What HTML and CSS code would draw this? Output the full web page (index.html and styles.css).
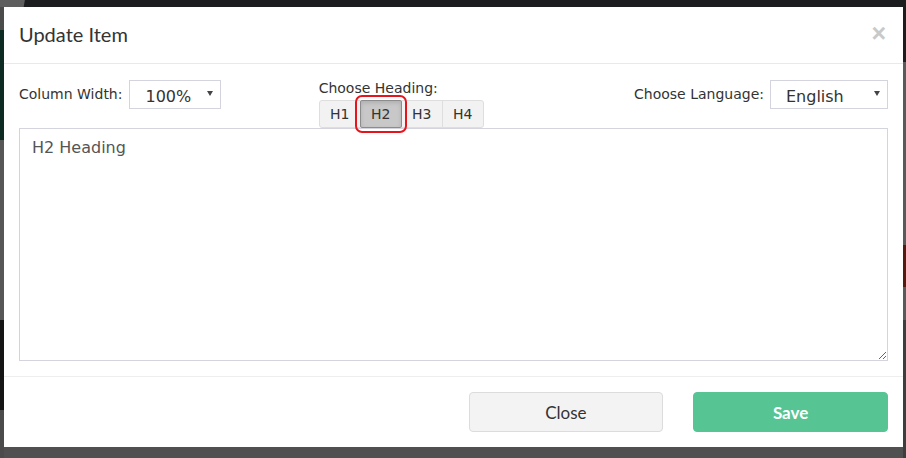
FILE: index.html
```html
<!DOCTYPE html>
<html lang="en">
<head>
<meta charset="utf-8">
<title>Update Item</title>
<link rel="stylesheet" href="styles.css">
</head>
<body>
<div class="modal">
  <div class="modal-header">
    <h4 class="modal-title">Update Item</h4>
    <button class="close" type="button">&times;</button>
  </div>
  <div class="modal-body">
    <div class="controls">
      <div class="col col-left">
        <span class="label">Column Width:</span>
        <div class="select select-width"><span>100%</span><i class="caret"></i></div>
      </div>
      <div class="col col-mid">
        <span class="label label-block">Choose Heading:</span>
        <div class="btn-group">
          <button class="hbtn" type="button">H1</button>
          <button class="hbtn active" type="button">H2</button>
          <button class="hbtn" type="button">H3</button>
          <button class="hbtn" type="button">H4</button>
        </div>
      </div>
      <div class="col col-right">
        <span class="label">Choose Language:</span>
        <div class="select select-lang"><span>English</span><i class="caret"></i></div>
      </div>
    </div>
    <textarea class="editor">H2 Heading</textarea>
  </div>
  <div class="modal-footer">
    <div></div>
    <div></div>
    <button class="btn btn-close" type="button">Close</button>
    <button class="btn btn-save" type="button">Save</button>
  </div>
</div>
</body>
</html>
```

FILE: styles.css
```css
* { box-sizing: border-box; }

html, body { height: 100%; }

body {
  margin: 0;
  overflow: hidden;
  font-family: "DejaVu Sans", Verdana, sans-serif;
  background:
    linear-gradient(100deg, #5e5e5e 0 24px, transparent 25px) 0 0 / 30px 7px no-repeat,
    linear-gradient(to bottom, #4b4b4b 0 30px, #0d2b22 30px 140px, #575757 140px 320px, #151515 320px 410px, #4b4b4b 410px) left top / 4px 100% no-repeat,
    linear-gradient(to bottom, #1c1d1f 0 62px, #5a5a5a 62px 245px, #58190f 245px 287px, #5a5a5a 287px 320px, #3e3e3e 320px) right top / 3px 100% no-repeat,
    linear-gradient(#1c1d1f 0 7px, #505050 7px);
}

.modal {
  position: absolute;
  left: 4px;
  top: 7px;
  width: 899px;
  height: 440px;
  background: #fff;
  display: flex;
  flex-direction: column;
}

.modal-header {
  height: 57px;
  border-bottom: 1px solid #e9e9e9;
  padding: 0 15px;
  display: flex;
  align-items: center;
  justify-content: space-between;
}

.modal-title {
  margin: 0;
  font-family: Lato, "Open Sans", sans-serif;
  font-weight: 400;
  font-size: 20px;
  color: #333;
  position: relative;
  top: -1px;
}

.close {
  border: 0;
  background: none;
  padding: 0;
  font-family: "Liberation Sans", Arial, sans-serif;
  font-size: 25px;
  font-weight: 700;
  line-height: 1;
  color: #c9c9c9;
  margin-right: 2px;
  position: relative;
  top: -2px;
}

.modal-body {
  padding: 16px 15px 15px;
  flex: 1;
  display: flex;
  flex-direction: column;
}

.controls {
  display: grid;
  grid-template-columns: 1fr 1fr 1fr;
  column-gap: 30px;
  height: 48px;
}

.col { display: flex; align-items: flex-start; }

.col-left { gap: 7px; }
.col-right { justify-content: flex-end; gap: 6px; }

.col-mid { flex-direction: column; align-items: flex-start; }

.label {
  font-size: 14px;
  color: #333;
  line-height: 29px;
}

.label-block {
  line-height: 16px;
  margin-top: 0;
}

.select {
  height: 29px;
  border: 1px solid #d3d4de;
  background: #fff;
  display: flex;
  align-items: center;
  justify-content: space-between;
  padding: 4px 7px 0 15px;
  font-size: 16px;
  color: #333;
}

.select-width { width: 92px; }
.select-lang { width: 118px; }

.caret {
  display: block;
  width: 0;
  height: 0;
  border-left: 3px solid transparent;
  border-right: 3px solid transparent;
  border-top: 5px solid #444;
  margin-top: -6px;
}

.btn-group {
  display: flex;
  margin-top: 4px;
}

.hbtn {
  width: 42px;
  height: 28px;
  border: 1px solid #dedede;
  margin-left: -1px;
  background: #f2f2f2;
  font-family: "DejaVu Sans", Verdana, sans-serif;
  font-size: 14px;
  color: #333;
  padding: 0;
}

.hbtn:first-child { margin-left: 0; border-radius: 3px 0 0 3px; }
.hbtn:last-child { border-radius: 0 3px 3px 0; }

.hbtn.active {
  background: #c8c8c8;
  border-color: #8c8c8c;
  box-shadow: inset 0 2px 4px rgba(0,0,0,.12);
  outline: 2px solid #e8141c;
  outline-offset: 3px;
  border-radius: 2px;
  position: relative;
  z-index: 1;
}

.editor {
  flex: 1;
  width: 100%;
  margin: 0;
  border: 1px solid #d3d4de;
  padding: 9px 12px;
  font-family: "DejaVu Sans", Verdana, sans-serif;
  font-size: 16px;
  color: #555;
  resize: vertical;
  outline: none;
}

.modal-footer {
  border-top: 1px solid #eeeeee;
  padding: 15px 15px 15px;
  display: grid;
  grid-template-columns: repeat(4, 1fr);
  column-gap: 30px;
}

.btn {
  height: 40px;
  border-radius: 4px;
  font-family: Lato, "Open Sans", sans-serif;
  font-size: 17px;
}

.btn-close {
  background: #f3f3f3;
  border: 1px solid #dcdcdc;
  color: #333;
}

.btn-save {
  background: #57c494;
  border: 1px solid #57c494;
  color: #fff;
  font-weight: 700;
}
```
